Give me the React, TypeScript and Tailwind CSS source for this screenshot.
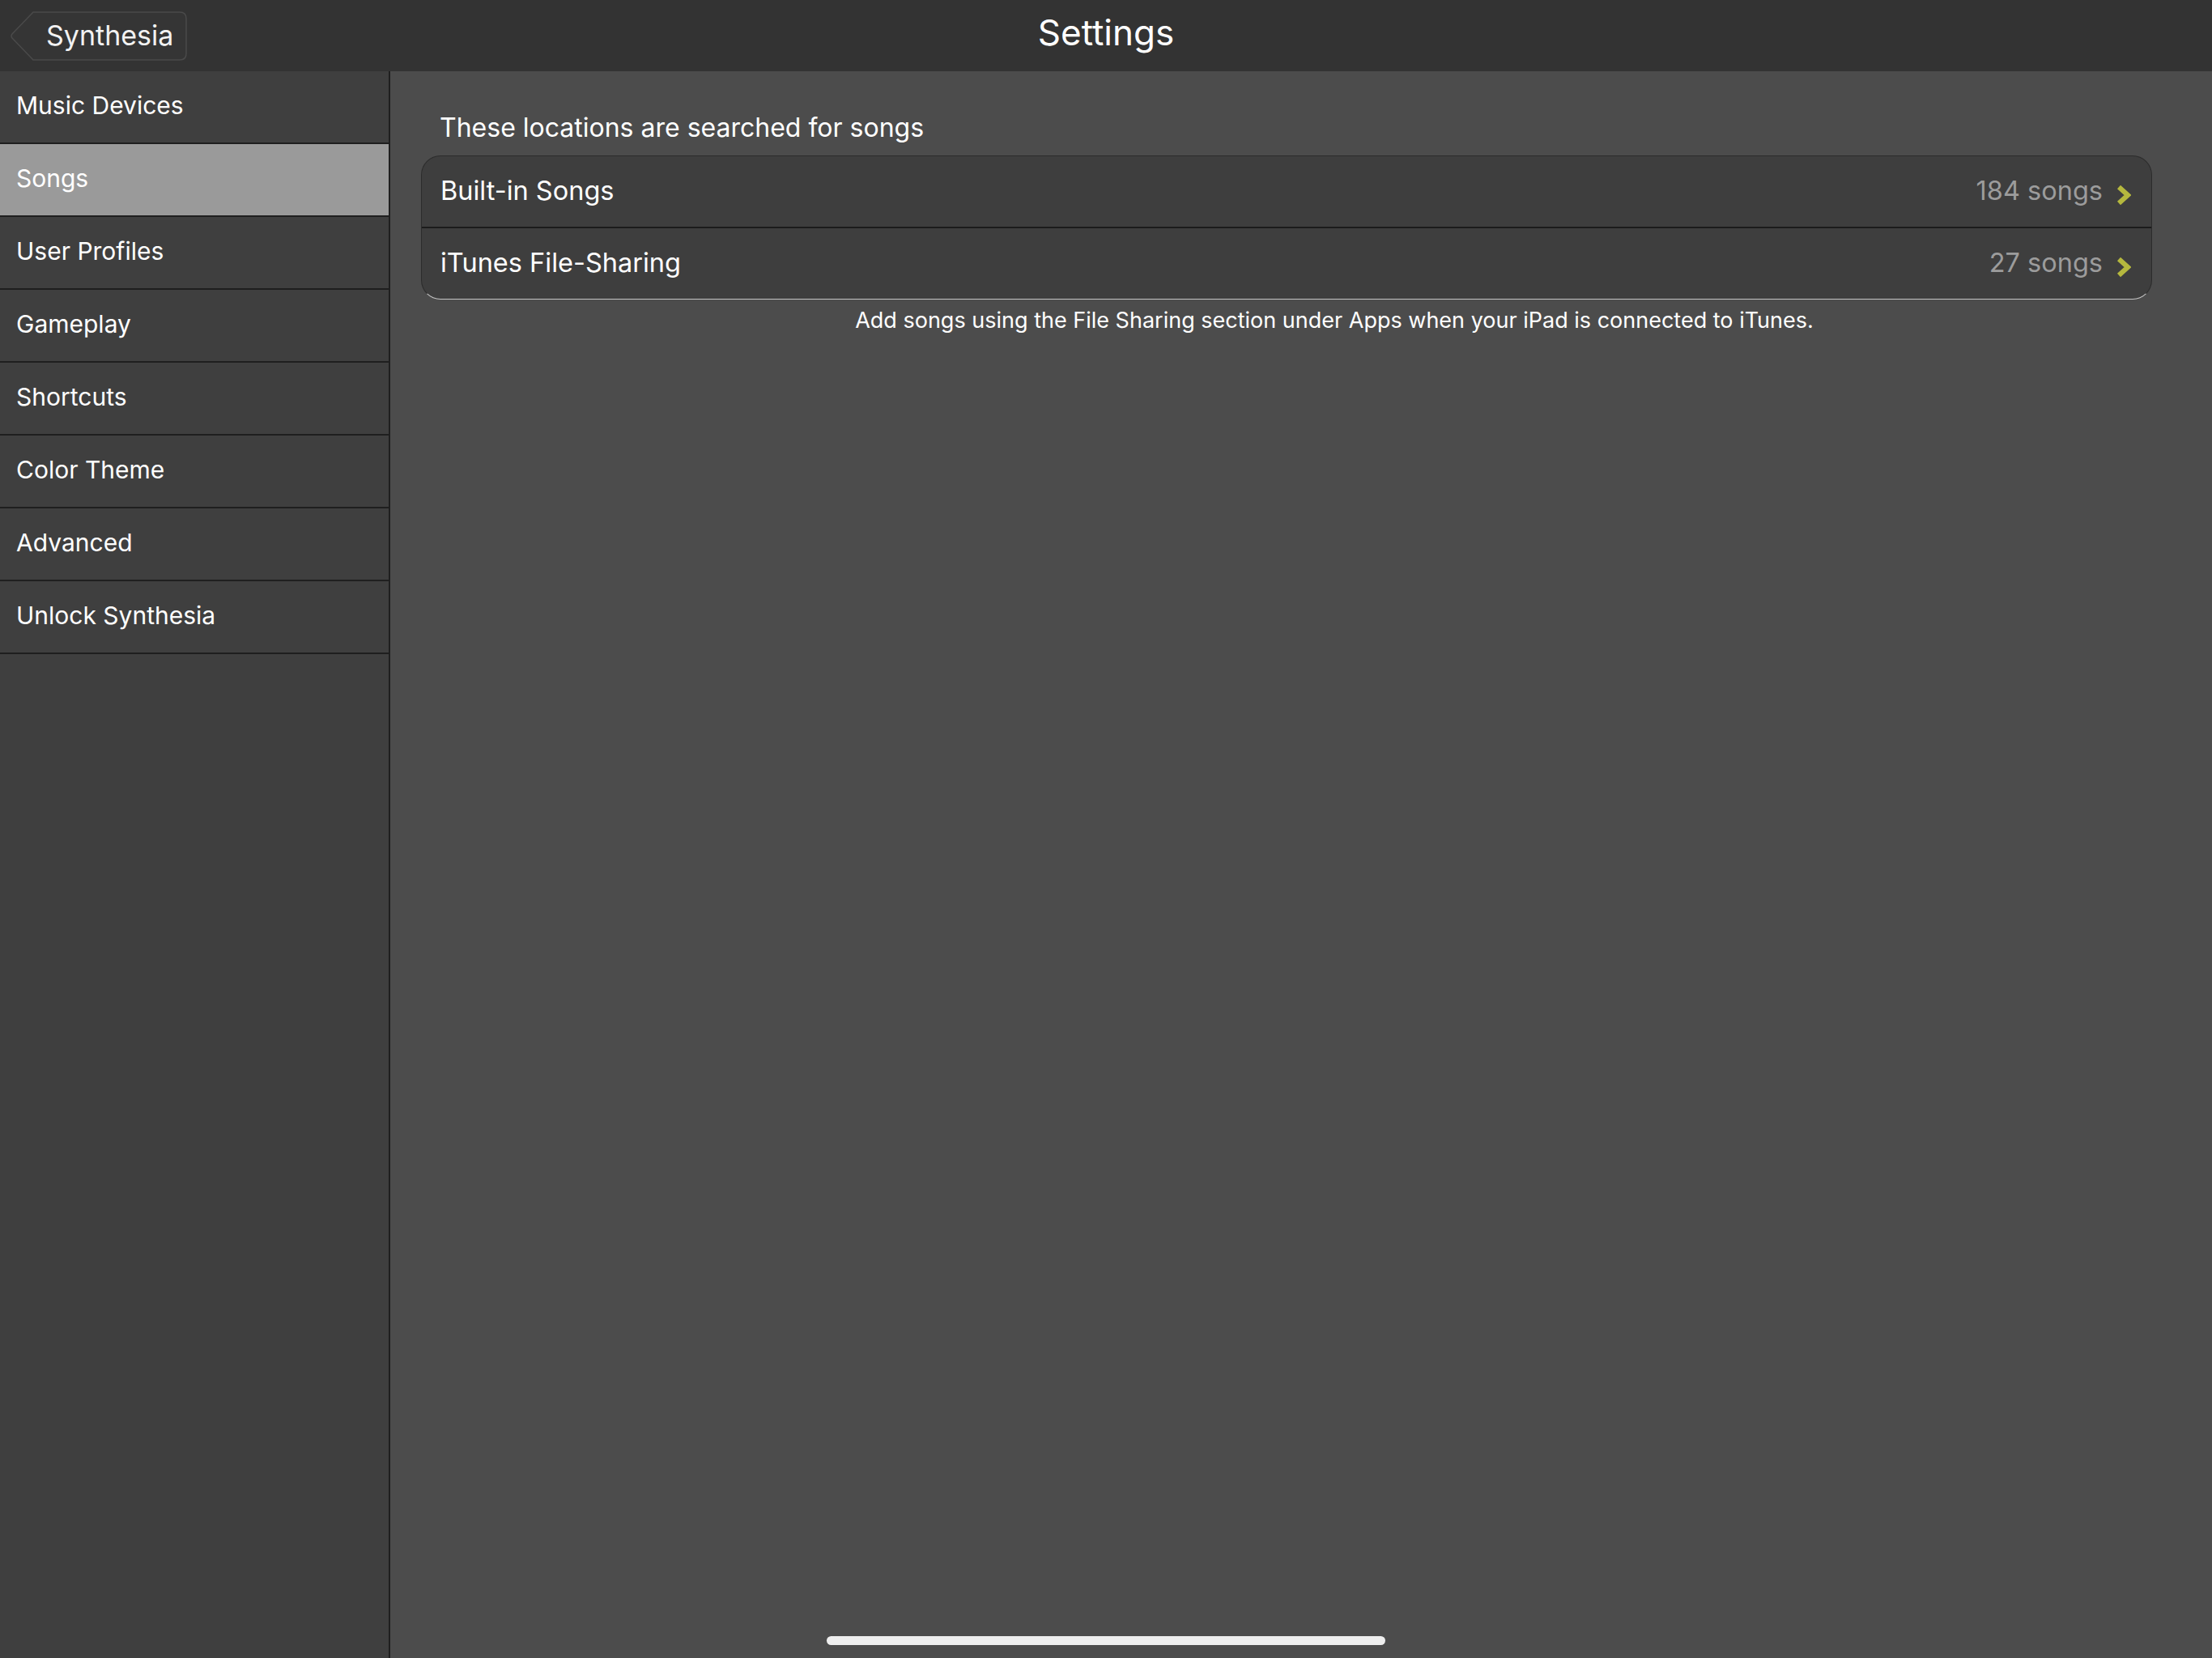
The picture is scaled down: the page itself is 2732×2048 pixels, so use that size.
const sections = [
  "Music Devices",
  "Songs",
  "User Profiles",
  "Gameplay",
  "Shortcuts",
  "Color Theme",
  "Advanced",
  "Unlock Synthesia",
];

const locations = [
  { name: "Built-in Songs", count: "184 songs" },
  { name: "iTunes File-Sharing", count: "27 songs" },
];

const Chevron = () => (
  <svg width="18" height="26" viewBox="0 0 18 26" className="mt-[8px] shrink-0">
    <polyline
      points="3,3 14,13 3,23"
      fill="none"
      stroke="#b5b83e"
      strokeWidth="6"
      strokeLinejoin="miter"
    />
  </svg>
);

const BackButton = () => (
  <div className="relative ml-[13px] flex h-[61px] w-[218px] items-center">
    <svg
      className="absolute inset-0"
      width="218"
      height="61"
      viewBox="0 0 218 61"
    >
      <path
        d="M28 1 H209 Q217 1 217 9 V52 Q217 60 209 60 H28 L2 33 Q0 30.5 2 28 Z"
        fill="#353535"
        stroke="#4a4a4a"
        strokeWidth="1.5"
      />
    </svg>
    <span className="relative pl-[44px] text-[34px] leading-none text-[#f2f2f2]">
      Synthesia
    </span>
  </div>
);

export default function App() {
  return (
    <div
      className="relative flex h-[2048px] w-[2732px] flex-col overflow-hidden bg-[#4c4c4c]"
      style={{ fontFamily: "Inter, 'Noto Sans', sans-serif" }}
    >
      <header className="relative flex h-[88px] shrink-0 items-center bg-[#333333]">
        <BackButton />
        <div className="absolute inset-x-0 top-0 flex h-[80px] items-center justify-center pointer-events-none">
          <span className="text-[44px] leading-none text-white">Settings</span>
        </div>
      </header>

      <div className="flex flex-1">
        <nav className="w-[482px] shrink-0 border-r-2 border-[#1f1f1f] bg-[#3f3f3f]">
          {sections.map((s) => (
            <div
              key={s}
              className={
                s === "Songs"
                  ? "flex h-[90px] items-center border-b-2 border-[#1f1f1f] bg-[#9a9a9a] pb-[3px] pl-[20px] text-[30px] text-white"
                  : "flex h-[90px] items-center border-b-2 border-[#1f1f1f] pb-[3px] pl-[20px] text-[30px] text-white"
              }
            >
              {s}
            </div>
          ))}
        </nav>

        <main className="flex-1 pl-[38px] pr-[74px] pt-[50px]">
          <div className="pl-[23px] text-[32px] leading-[40px] text-white">
            These locations are searched for songs
          </div>
          <div className="mt-[14px] overflow-hidden rounded-[24px] border border-[#2c2c2c] border-b-[#c4c4c4] bg-[#3e3e3e]">
            {locations.map((loc, i) => (
              <div
                key={loc.name}
                className={
                  i === 0
                    ? "flex h-[89px] items-center border-b-2 border-[#1c1c1c] pl-[23px] pr-[25px]"
                    : "flex h-[87px] items-center pl-[23px] pr-[25px]"
                }
              >
                <span className="flex-1 text-[32.5px] text-white">{loc.name}</span>
                <span className="mr-[17px] text-[32.5px] text-[#9c9c9c]">
                  {loc.count}
                </span>
                <Chevron />
              </div>
            ))}
          </div>
          <div className="mt-[8px] pl-[118px] text-center text-[27px] leading-[36px] text-white">
            Add songs using the File Sharing section under Apps when your iPad
            is connected to iTunes.
          </div>
        </main>
      </div>

      <div className="absolute bottom-[16px] left-[1021px] h-[11px] w-[690px] rounded-full bg-[#eeeeee]" />
    </div>
  );
}
